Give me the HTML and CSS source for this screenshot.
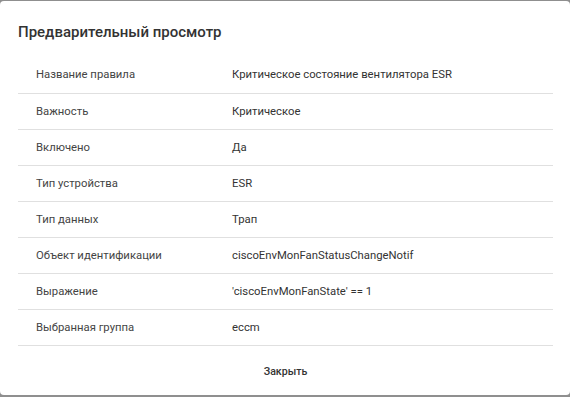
FILE: index.html
```html
<!DOCTYPE html>
<html lang="ru">
<head>
    <meta charset="UTF-8">
    <meta name="viewport" content="width=device-width, initial-scale=1.0">
    <title>Предварительный просмотр</title>
    <link rel="stylesheet" href="styles.css">
</head>
<body>
    <div class="dialog">
        <h2 class="dialog-title">Предварительный просмотр</h2>
        <table class="preview-table">
            <tr><td>Название правила</td><td>Критическое состояние вентилятора ESR</td></tr>
            <tr><td>Важность</td><td>Критическое</td></tr>
            <tr><td>Включено</td><td>Да</td></tr>
            <tr><td>Тип устройства</td><td>ESR</td></tr>
            <tr><td>Тип данных</td><td>Трап</td></tr>
            <tr><td>Объект идентификации</td><td>ciscoEnvMonFanStatusChangeNotif</td></tr>
            <tr><td>Выражение</td><td>'ciscoEnvMonFanState' == 1</td></tr>
            <tr><td>Выбранная группа</td><td>eccm</td></tr>
        </table>
        <div class="dialog-actions">
            <button class="close-btn">Закрыть</button>
        </div>
    </div>
</body>
</html>
```

FILE: styles.css
```css
* {
    margin: 0;
    padding: 0;
    box-sizing: border-box;
    font-family: Roboto, 'Liberation Sans', sans-serif;
}

body {
    background-color: #8f8f8f;
    padding-top: 1px;
    height: 397px;
    overflow: hidden;
}

.dialog {
    background: white;
    border-radius: 4px;
    height: 394px;
    padding: 0 17px 0 18px;
}

.dialog-title {
    font-size: 15px;
    font-weight: 500;
    color: #333;
    padding-top: 21px;
    line-height: 20px;
    height: 56px;
}

.preview-table {
    width: 100%;
    border-collapse: collapse;
    font-size: 11.3px;
    color: #333;
}

.preview-table tr {
    height: 36px;
    border-bottom: 1px solid #e0e0e0;
}

.preview-table td {
    padding: 0 18px;
    vertical-align: middle;
}

.preview-table td:first-child {
    width: 196px;
    color: #444;
}

.dialog-actions {
    display: flex;
    justify-content: center;
    padding-top: 12px;
}

.close-btn {
    background: none;
    border: none;
    font-size: 10.6px;
    font-weight: 500;
    color: #333;
    padding: 6px 16px;
    line-height: 16px;
    cursor: pointer;
}
```
